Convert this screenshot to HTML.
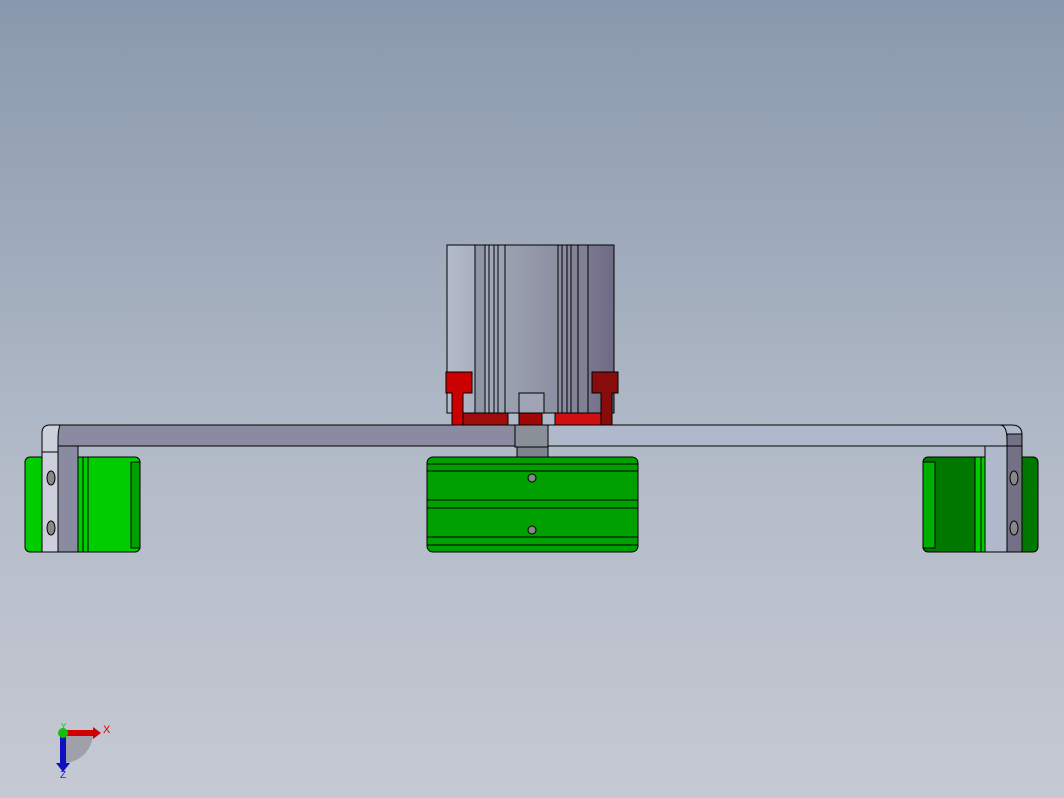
<!DOCTYPE html>
<html><head><style>
html,body{margin:0;padding:0;width:1064px;height:798px;overflow:hidden;background:linear-gradient(#8999ad,#b4bcc9 60%,#c6c9d3);font-family:"Liberation Sans",sans-serif}
svg{position:absolute;left:0;top:0}
</style></head><body>
<svg width="1064" height="798" viewBox="0 0 1064 798">
<defs>
<linearGradient id="cyl" x1="0" x2="1">
<stop offset="0" stop-color="#b4bccc"/><stop offset="0.17" stop-color="#a8b0c0"/><stop offset="0.35" stop-color="#9aa2b2"/><stop offset="0.7" stop-color="#8a8c9e"/><stop offset="0.85" stop-color="#7a7890"/><stop offset="1" stop-color="#6e6a84"/>
</linearGradient>
</defs>
<g stroke="#000" stroke-width="1">
<!-- cylinder -->
<rect x="447" y="245" width="167" height="168" fill="url(#cyl)"/>
<rect x="475" y="245" width="10" height="168" fill="#8e96a6"/>
<line x1="489" y1="245" x2="489" y2="413"/><line x1="494" y1="245" x2="494" y2="413"/>
<line x1="498" y1="245" x2="498" y2="413"/><line x1="505" y1="245" x2="505" y2="413"/>
<line x1="558" y1="245" x2="558" y2="413"/><line x1="562" y1="245" x2="562" y2="413"/>
<line x1="567" y1="245" x2="567" y2="413"/><line x1="571" y1="245" x2="571" y2="413"/>
<rect x="578" y="245" width="10" height="168" fill="#7e8294"/>
<rect x="519" y="393" width="25" height="20" fill="#a0a4b4"/>
<!-- red brackets -->
<path d="M446 372H472V393H463V425H452V393H446Z" fill="#cc0000"/>
<path d="M592 372H618V393H612V425H601V393H592Z" fill="#880c0c"/>
<path d="M463 413H519V425H463Z" fill="#a00c0c"/>
<path d="M555 413H601V425H555Z" fill="#d01010"/>
<rect x="508" y="413" width="11" height="12" fill="#b0b8c8"/>
<rect x="519" y="413" width="23" height="12" fill="#a00808"/>
<rect x="542" y="413" width="13" height="12" fill="#b0b8c8"/>
<!-- bar -->
<path d="M58 425H515V446H78V552H58Z" fill="#8a8aa0"/>
<path d="M42 433Q42 425 50 425H60Q58 430 58 440V552H42Z" fill="#ccd0dc"/>
<path d="M548 425H1012Q1022 425 1022 435H985V446H548Z" fill="#b0b8cc"/>
<path d="M548 425H1000Q1007 425 1007 440V552H985V446H548Z" fill="#b0b8cc"/>
<rect x="1007" y="434" width="15" height="118" fill="#747086"/>
<rect x="515" y="425" width="33" height="22" fill="#8a9098"/>
<rect x="517" y="447" width="31" height="11" fill="#7e848c"/>
<!-- center green -->
<rect x="427" y="457" width="211" height="95" rx="6" fill="#00a000"/>
<line x1="427" y1="464" x2="638" y2="464"/><line x1="427" y1="471" x2="638" y2="471"/>
<line x1="427" y1="500" x2="638" y2="500"/><line x1="427" y1="508" x2="638" y2="508"/>
<line x1="427" y1="537" x2="638" y2="537"/><line x1="427" y1="545" x2="638" y2="545"/>
<circle cx="532" cy="478" r="4" fill="#888"/><circle cx="532" cy="530" r="4" fill="#888"/>
<!-- left green -->
<rect x="25" y="457" width="115" height="95" rx="5" fill="#00cc00"/>
<rect x="131" y="462" width="9" height="86" fill="#00a000"/>
<line x1="83" y1="457" x2="83" y2="552"/><line x1="88" y1="457" x2="88" y2="552"/>
<rect x="42" y="452" width="16" height="100" fill="#ccd0dc"/>
<rect x="58" y="446" width="20" height="106" fill="#8a8aa0"/>
<ellipse cx="51" cy="478" rx="4" ry="7" fill="#888"/><ellipse cx="51" cy="528" rx="4" ry="7" fill="#888"/>
<!-- right green -->
<rect x="923" y="457" width="115" height="95" rx="5" fill="#007800"/>
<rect x="923" y="462" width="12" height="86" fill="#00b000"/>
<rect x="975" y="457" width="10" height="95" fill="#00cc00"/>
<line x1="981" y1="457" x2="981" y2="552"/>
<rect x="985" y="446" width="22" height="106" fill="#b0b8cc"/>
<rect x="1007" y="446" width="15" height="106" fill="#747086"/>
<ellipse cx="1014" cy="478" rx="4" ry="7" fill="#888"/><ellipse cx="1014" cy="528" rx="4" ry="7" fill="#888"/>
</g>
<!-- triad -->
<path d="M63 733H93A30 30 0 0 1 63 763Z" fill="#8e929a" opacity="0.7"/>
<rect x="63" y="730" width="30" height="6" fill="#d00000"/>
<path d="M93 727L101 733L93 739Z" fill="#d00000"/>
<rect x="60" y="733" width="6" height="30" fill="#1010c0"/>
<path d="M56 763L63 772L70 763Z" fill="#1010c0"/>
<circle cx="63" cy="733" r="5" fill="#10c010"/>
<text x="103" y="733" font-size="11" fill="#e00000">X</text>
<text x="60" y="778" font-size="10" fill="#2020e0">Z</text>
<text x="61" y="729" font-size="8" fill="#10c010">Y</text>
</svg>
</body></html>
